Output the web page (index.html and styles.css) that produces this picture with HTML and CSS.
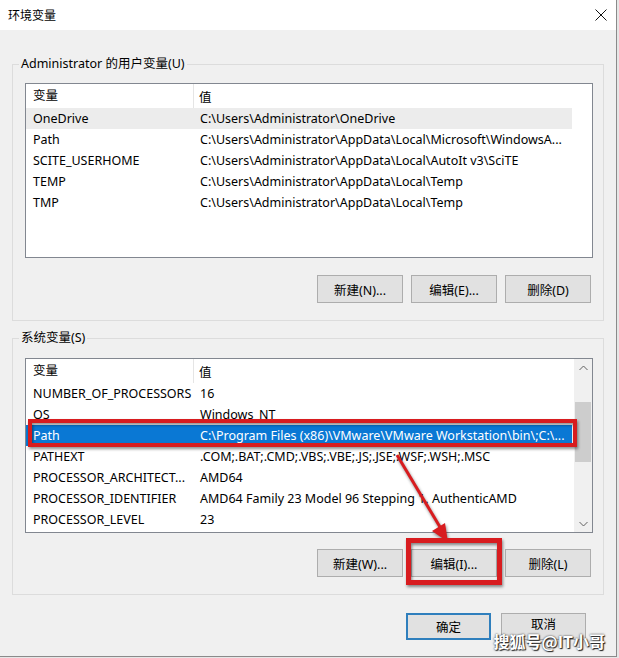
FILE: index.html
```html
<!DOCTYPE html>
<html lang="zh-CN">

<head>
    <meta charset="UTF-8">
    <meta name="viewport" content="width=device-width, initial-scale=1.0">
    <title>环境变量</title>
    <link rel="stylesheet" href="styles.css">
</head>

<body>
    <div class="window">
        <div class="titlebar">
            <span class="title">环境变量</span>
            <svg class="close" width="12" height="12" viewBox="0 0 12 12">
                <path d="M0.5 0.5 L11.5 11.5 M11.5 0.5 L0.5 11.5" stroke="#111" stroke-width="1" fill="none" />
            </svg>
        </div>

        <div class="content">
            <fieldset class="group">
                <legend>Administrator 的用户变量(U)</legend>
                <div class="list">
                    <div class="rows">
                        <div class="list-head">
                            <span class="col-name">变量</span>
                            <span class="col-value">值</span>
                        </div>
                        <div class="row soft">
                            <span class="col-name">OneDrive</span>
                            <span class="col-value">C:\Users\Administrator\OneDrive</span>
                        </div>
                        <div class="row">
                            <span class="col-name">Path</span>
                            <span class="col-value">C:\Users\Administrator\AppData\Local\Microsoft\WindowsA...</span>
                        </div>
                        <div class="row">
                            <span class="col-name">SCITE_USERHOME</span>
                            <span class="col-value">C:\Users\Administrator\AppData\Local\AutoIt v3\SciTE</span>
                        </div>
                        <div class="row">
                            <span class="col-name">TEMP</span>
                            <span class="col-value">C:\Users\Administrator\AppData\Local\Temp</span>
                        </div>
                        <div class="row">
                            <span class="col-name">TMP</span>
                            <span class="col-value">C:\Users\Administrator\AppData\Local\Temp</span>
                        </div>
                    </div>
                </div>
                <div class="buttons">
                    <button>新建(N)...</button>
                    <button>编辑(E)...</button>
                    <button>删除(D)</button>
                </div>
            </fieldset>

            <fieldset class="group system">
                <legend>系统变量(S)</legend>
                <div class="list">
                    <div class="rows">
                        <div class="list-head">
                            <span class="col-name">变量</span>
                            <span class="col-value">值</span>
                        </div>
                        <div class="row">
                            <span class="col-name">NUMBER_OF_PROCESSORS</span>
                            <span class="col-value">16</span>
                        </div>
                        <div class="row">
                            <span class="col-name">OS</span>
                            <span class="col-value">Windows_NT</span>
                        </div>
                        <div class="row selected">
                            <span class="col-name">Path</span>
                            <span class="col-value">C:\Program Files (x86)\VMware\VMware Workstation\bin\;C:\...</span>
                        </div>
                        <div class="row">
                            <span class="col-name">PATHEXT</span>
                            <span class="col-value">.COM;.BAT;.CMD;.VBS;.VBE;.JS;.JSE;.WSF;.WSH;.MSC</span>
                        </div>
                        <div class="row">
                            <span class="col-name">PROCESSOR_ARCHITECT...</span>
                            <span class="col-value">AMD64</span>
                        </div>
                        <div class="row">
                            <span class="col-name">PROCESSOR_IDENTIFIER</span>
                            <span class="col-value">AMD64 Family 23 Model 96 Stepping 1, AuthenticAMD</span>
                        </div>
                        <div class="row">
                            <span class="col-name">PROCESSOR_LEVEL</span>
                            <span class="col-value">23</span>
                        </div>
                    </div>
                    <div class="scrollbar">
                        <div class="arrow">
                            <svg width="9" height="6" viewBox="0 0 9 6">
                                <polyline points="0.5,5 4.5,1 8.5,5" fill="none" stroke="#606060" stroke-width="1" />
                            </svg>
                        </div>
                        <div class="track">
                            <div class="thumb"></div>
                        </div>
                        <div class="arrow">
                            <svg width="9" height="6" viewBox="0 0 9 6">
                                <polyline points="0.5,1 4.5,5 8.5,1" fill="none" stroke="#606060" stroke-width="1" />
                            </svg>
                        </div>
                    </div>
                </div>
                <div class="buttons">
                    <button>新建(W)...</button>
                    <button>编辑(I)...</button>
                    <button>删除(L)</button>
                </div>
            </fieldset>

            <div class="dialog-buttons">
                <button class="default">确定</button>
                <button class="cancel">取消</button>
            </div>
        </div>

        <!-- red marks drawn over the dialog -->
        <svg class="marks" width="616" height="656" viewBox="0 0 616 656">
            <rect x="30" y="421" width="545" height="24" fill="none" stroke="#d81c1f" stroke-width="4" />
            <rect x="408.5" y="540.5" width="91" height="42" fill="none" stroke="#d81c1f" stroke-width="5" />
            <line x1="397" y1="455" x2="440" y2="527" stroke="#d81c1f" stroke-width="3" />
            <polygon points="448,542 445,523 432,531" fill="#d81c1f" />
        </svg>

        <div class="watermark">搜狐号@IT小哥</div>
    </div>
</body>

</html>
```

FILE: styles.css
```css
* {
    padding: 0;
    margin: 0;
    box-sizing: border-box;
}

body {
    background-color: #e6e6e6;
    font-family: "Noto Sans", "Noto Sans CJK SC", sans-serif;
    font-size: 12px;
    color: #000;
}

.window {
    position: relative;
    width: 617px;
    height: 657px;
    background-color: #f0f0f0;
    border-right: 1px solid #8a8a8a;
    border-bottom: 1px solid #8a8a8a;
}

.titlebar {
    height: 30px;
    background-color: #fff;
    display: flex;
    align-items: center;
    justify-content: space-between;
    padding: 0 9px 0 8px;
}

.title {
    font-size: 12px;
}

.close {
    display: block;
    margin-top: -1px;
}

.content {
    padding: 26px 12px 0 12px;
}

.group {
    border: 1px solid #dcdcdc;
    padding: 0 10px 17px 12px;
    min-width: 0;
}

.group legend {
    line-height: 16px;
    padding: 0 2px;
    margin-left: -6px;
    font-size: 12.5px;
}

.system {
    margin-top: 9px;
}

.list {
    display: flex;
    margin-top: 11px;
    height: 175px;
    background-color: #fff;
    border: 1px solid #828790;
    font-size: 12.5px;
}

.system .list {
    margin-top: 12px;
}

.rows {
    flex: 1;
    overflow: hidden;
}

.list-head,
.row {
    display: flex;
    align-items: center;
    width: 546px;
    white-space: nowrap;
}

.list-head {
    height: 24px;
}

.row {
    height: 21px;
}

.col-name {
    width: 168px;
    padding-left: 7px;
    overflow: hidden;
}

.col-value {
    width: 378px;
    padding-left: 6px;
    overflow: hidden;
}

.list-head .col-name {
    height: 24px;
    line-height: 24px;
    border-right: 1px solid #e5e5e5;
}

.list-head .col-value {
    padding-left: 5px;
}

.row.soft {
    background-color: #ececec;
}

.row.selected {
    background-color: #0a78d4;
    color: #fff;
}

.scrollbar {
    width: 18px;
    display: flex;
    flex-direction: column;
    background-color: #f0f0f0;
}

.arrow {
    height: 17px;
    display: flex;
    align-items: center;
    justify-content: center;
}

.track {
    flex: 1;
    padding: 26px 1px 0 1px;
}

.thumb {
    height: 60px;
    background-color: #cdcdcd;
}

.buttons {
    display: flex;
    justify-content: flex-end;
    gap: 8px;
    margin-top: 17px;
    padding-right: 2px;
}

.system .buttons {
    margin-top: 16px;
}

button {
    width: 86px;
    height: 28px;
    background-color: #e1e1e1;
    border: 1px solid #adadad;
    font-family: inherit;
    font-size: 12.5px;
    color: #000;
}

.dialog-buttons {
    display: flex;
    justify-content: flex-end;
    gap: 10px;
    margin-top: 18px;
    padding-right: 18px;
}

.dialog-buttons button {
    width: 85px;
    height: 27px;
}

.dialog-buttons .default {
    border: 2px solid #2f7fbd;
}

.dialog-buttons .cancel {
    padding-bottom: 6px;
}

.marks {
    position: absolute;
    top: 0;
    left: 0;
    pointer-events: none;
    filter: drop-shadow(1px 2px 1.5px rgba(0, 0, 0, 0.45));
}

.watermark {
    position: absolute;
    right: 11px;
    bottom: 5px;
    font-family: "Noto Sans CJK SC", sans-serif;
    font-size: 16px;
    line-height: 20px;
    font-weight: bold;
    color: #fff;
    text-shadow: 0 0 2px #222, 1px 1px 1px #222;
}
```
